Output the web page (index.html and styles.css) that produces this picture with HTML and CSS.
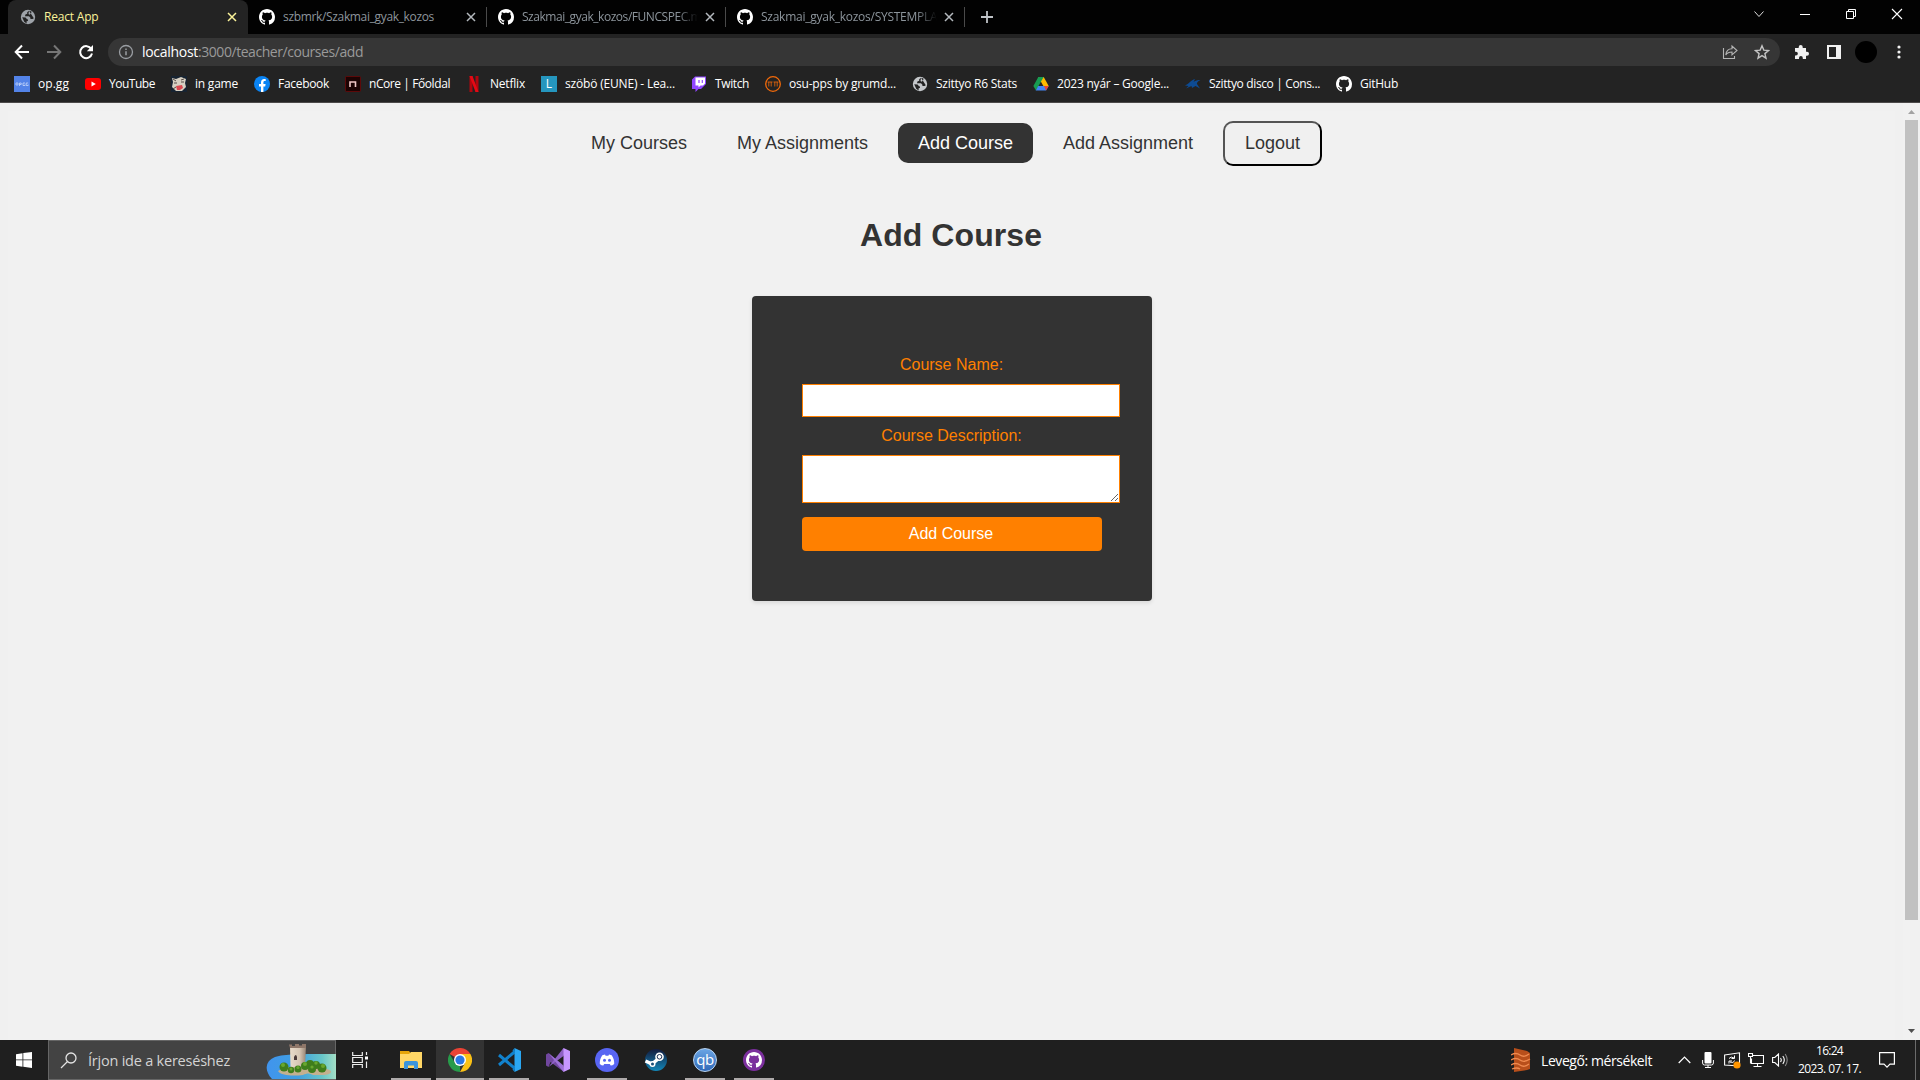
FILE: index.html
```
<!DOCTYPE html>
<html lang="hu">
<head>
<meta charset="utf-8">
<title>React App</title>
<link rel="stylesheet" href="styles.css">
</head>
<body>
<svg class="defs" width="0" height="0">
  <symbol id="octocat" viewBox="0 0 16 16"><path fill="currentColor" d="M8 0C3.58 0 0 3.58 0 8c0 3.54 2.29 6.53 5.47 7.59.4.07.55-.17.55-.38 0-.19-.01-.82-.01-1.49-2.01.37-2.53-.49-2.69-.94-.09-.23-.48-.94-.82-1.13-.28-.15-.68-.52-.01-.53.63-.01 1.08.58 1.23.82.72 1.21 1.87.87 2.33.66.07-.52.28-.87.51-1.07-1.78-.2-3.64-.89-3.64-3.95 0-.87.31-1.59.82-2.15-.08-.2-.36-1.02.08-2.12 0 0 .67-.21 2.2.82.64-.18 1.32-.27 2-.27s1.36.09 2 .27c1.53-1.04 2.2-.82 2.2-.82.44 1.1.16 1.92.08 2.12.51.56.82 1.27.82 2.15 0 3.07-1.87 3.75-3.65 3.95.29.25.54.73.54 1.48 0 1.07-.01 1.93-.01 2.2 0 .21.15.46.55.38A8.01 8.01 0 0 0 16 8c0-4.42-3.58-8-8-8z"/></symbol>
  <symbol id="globe" viewBox="0 0 16 16"><circle cx="8" cy="8" r="7.2" fill="currentColor"/><path class="land" d="M9 1.8 7.2 3.3v1.5l-1.8.7-.4 1.8H9l1.4 1.4v1.4h2.2l1.2-.8M2.2 8.3l3.4.2L7 10.2l1 .3v1.2l-1.5.8.2 1.9-2.5-1.7zM9 1.8l2.5.7-.4 2-1.6 1.3-1-.8z"/></symbol>
  <symbol id="cross" viewBox="0 0 10 10"><path d="m1 1 8 8M9 1 1 9" stroke="currentColor" stroke-width="1.5"/></symbol>
</svg>

<header class="browser">
  <div class="tabstrip">
    <div class="tab active">
      <svg class="fav"><use href="#globe"/></svg><span class="title"><span data-w="54.5">React App</span></span><svg class="close"><use href="#cross"/></svg>
    </div>
    <div class="tab">
      <svg class="fav"><use href="#octocat"/></svg><span class="title"><span data-w="151">szbmrk/Szakmai_gyak_kozos</span></span><svg class="close"><use href="#cross"/></svg>
    </div>
    <div class="tab">
      <svg class="fav"><use href="#octocat"/></svg><span class="title fade"><span data-w="186">Szakmai_gyak_kozos/FUNCSPEC.md</span></span><svg class="close"><use href="#cross"/></svg>
    </div>
    <div class="tab">
      <svg class="fav"><use href="#octocat"/></svg><span class="title fade"><span data-w="206">Szakmai_gyak_kozos/SYSTEMPLAN.md</span></span><svg class="close"><use href="#cross"/></svg>
    </div>
    <svg class="newtab" viewBox="0 0 12 12"><path d="M6 0v12M0 6h12" stroke="#bfc3c7" stroke-width="1.8"/></svg>
    <div class="winctl">
      <svg viewBox="0 0 12 12"><path d="m1.5 3.5 4.5 5 4.5-5" fill="none" stroke="#ddd"/></svg>
      <svg viewBox="0 0 12 12"><path d="M1 6.5h10" stroke="#fff"/></svg>
      <svg viewBox="0 0 12 12"><path d="M1.5 3.5h7v7h-7zM3.5 3.5v-2h7v7h-2" fill="none" stroke="#fff"/></svg>
      <svg viewBox="0 0 12 12"><path d="m1 1 10 10M11 1 1 11" stroke="#fff" stroke-width="1.1"/></svg>
    </div>
  </div>

  <div class="toolbar">
    <svg class="nav" viewBox="0 0 16 16"><path d="M15 8H2M8 1.5 1.7 8 8 14.5" fill="none" stroke="#fff" stroke-width="2"/></svg>
    <svg class="nav" viewBox="0 0 16 16"><path d="M1 8h13M8 1.5 14.3 8 8 14.5" fill="none" stroke="#767676" stroke-width="2"/></svg>
    <svg class="nav" viewBox="0 0 16 16"><path d="M13.3 5A6 6 0 1 0 14 9.5" fill="none" stroke="#fff" stroke-width="2"/><path d="M15 1v6.2H8.8z" fill="#fff"/></svg>
    <div class="omnibox">
      <svg class="info" viewBox="0 0 16 16"><circle cx="8" cy="8" r="6.5" fill="none" stroke="#9a9ea3" stroke-width="1.3"/><path d="M8 7.2v4M8 4.4v1.5" stroke="#9a9ea3" stroke-width="1.5"/></svg>
      <span class="url"><span class="host" data-w="56">localhost</span><span data-w="165">:3000/teacher/courses/add</span></span>
      <svg class="share" viewBox="0 0 16 16"><path d="M1.5 4v10.5h11V12M3.8 11c.3-4 2.700-6.200 6.200-6.200V2l5 4.500-5 4.300V8C7.400 8 5.200 8.700 3.800 11z" fill="none" stroke="#b5b5b5" stroke-width="1.1"/></svg>
      <svg class="star" viewBox="0 0 16 16"><path d="m8 1.800 1.800 4.300 4.700.4-3.600 3.100 1.100 4.600L8 11.700l-4 2.500 1.100-4.600L1.500 6.500l4.700-.4z" fill="none" stroke="#c4c4c4" stroke-width="1.4"/></svg>
    </div>
    <svg class="ext" viewBox="0 0 16 16"><path fill="#f1f1f1" d="M1 4h3.700V3a2 2 0 0 1 4 0v1H12v3.700h1a2 2 0 0 1 0 4h-1V15H8.800v-1a1.900 1.900 0 0 0-3.800 0v1H1v-3.600h1a1.800 1.800 0 0 0 0-3.700H1z"/></svg>
    <svg class="panel" viewBox="0 0 14 14"><path fill="#f1f1f1" fill-rule="evenodd" d="M0 0h14v14H0zM2 2v10h7V2z"/></svg>
    <span class="avatar"></span>
    <svg class="menu" viewBox="0 0 4 14"><circle cx="2" cy="2" r="1.600" fill="#f1f1f1"/><circle cx="2" cy="7" r="1.600" fill="#f1f1f1"/><circle cx="2" cy="12" r="1.600" fill="#f1f1f1"/></svg>
  </div>

  <nav class="bookmarks">
    <a><svg viewBox="0 0 16 16"><path fill="#5383e8" d="M0 0h16v16H0z"/><g fill="none" stroke="#c6d7fa" stroke-width=".8"><circle cx="3" cy="8" r="1.200"/><path d="M5.500 10V7h1.700v1.500H5.500M11 7H9v2.500h2V8.500M14.200 7h-2v2.500h2V8.500"/></g></svg><span data-w="31">op.gg</span></a>
    <a><svg viewBox="0 0 16 16"><rect y="2" width="16" height="12" rx="3" fill="#f00"/><path fill="#fff" d="m6.500 5.500 4.300 2.500-4.300 2.500z"/></svg><span data-w="46">YouTube</span></a>
    <a><svg viewBox="0 0 16 16"><path fill="#172331" d="M0 0h16v16H0z"/><path fill="#d7d0c2" d="m1 2 4 1 5-2 5 2-1 4 1 4-4 4H5l-4-4 1-5z"/><path fill="#da4850" d="m5 10 6-1 1 3-3 2H6z"/><path d="m2 3 3 2m5-1 3-1M3 7h3m4-1h3M2 13l3-2" stroke="#574b46"/></svg><span data-w="43">in game</span></a>
    <a><svg viewBox="0 0 16 16"><circle cx="8" cy="8" r="8" fill="#0a84f4"/><path fill="#fff" d="M7 16v-5.500H5V8h2V6.500C7 4.200 8.200 3 10.200 3l1.500.1v2h-1C9.700 5.100 9.400 5.700 9.400 6.400V8h2.200l-.4 2.500H9.400V16z"/></svg><span data-w="51">Facebook</span></a>
    <a><svg viewBox="0 0 16 16"><rect width="16" height="16" rx="2" fill="#5c0909"/><rect x="1" y="1" width="14" height="14" fill="#1c0303"/><path d="M5 11V6h5.500v5" fill="none" stroke="#efc6c6" stroke-width="1.600"/></svg><span data-w="81">nCore | Főoldal</span></a>
    <a><svg viewBox="0 0 16 16"><path fill="#b1060f" d="M3.500 0h3v16h-3zM9.500 0h3v16h-3z"/><path fill="#e50914" d="M3.500 0h3l6 16h-3z"/></svg><span data-w="35">Netflix</span></a>
    <a><span class="letter">L</span><span data-w="110">szöbö (EUNE) - Lea...</span></a>
    <a><svg viewBox="0 0 16 16"><path fill="#9146ff" d="M4 .5 1 3.500v9.500h3.500v3l3-3H10l5-5V.5z"/><path fill="#fff" d="M4.500 1.500H14v6l-2 2H9.500l-2 2v-2h-3z"/><path d="M8 4v3M11.300 4v3" stroke="#9146ff" stroke-width="1.200"/></svg><span data-w="34">Twitch</span></a>
    <a><svg viewBox="0 0 16 16"><g fill="none" stroke="#f26a0a"><circle cx="8" cy="8" r="7.300" stroke-width="1.300"/><path d="M2.500 6h5M3.800 6v4.500M6.200 6v4.500M8.500 6h5M9.800 6v4.500M12.200 6v4.500" stroke-width=".8"/></g></svg><span data-w="107">osu-pps by grumd...</span></a>
    <a class="grey"><svg viewBox="0 0 16 16"><use href="#globe"/></svg><span data-w="81">Szittyo R6 Stats</span></a>
    <a><svg viewBox="0 0 16 16"><path fill="#ffba00" d="M5.300 1h5.400l5 9h-5.300z"/><path fill="#179c52" d="M5.300 1h5.400L8 5.600 3 14.500.4 10z"/><path fill="#4285f4" d="M5.200 10h10.500L13 14.500H2.700z"/><path fill="#ea4335" d="M11 10h4.700L13 14.500z"/></svg><span data-w="112">2023 nyár – Google...</span></a>
    <a><svg viewBox="0 0 16 16"><path fill="#0d4b93" d="M0 9.500C4 8 6 4 10 3L8.500 6c2-1.500 4-2 7-2-3 1.500-4 3-3.500 4L15 12.500 10.500 10 7 12l-.5-2L1 12.500 3.500 10z"/></svg><span data-w="111">Szittyo disco | Cons...</span></a>
    <a><svg viewBox="0 0 16 16"><use href="#octocat"/></svg><span data-w="38">GitHub</span></a>
  </nav>
</header>

<div class="viewport">
  <main class="page">
    <nav class="sitenav">
      <a><span data-w="96">My Courses</span></a>
      <a><span data-w="131">My Assignments</span></a>
      <a class="current"><span data-w="95">Add Course</span></a>
      <a><span data-w="130">Add Assignment</span></a>
      <button class="logout"><span data-w="55">Logout</span></button>
    </nav>
    <h1><span data-w="182">Add Course</span></h1>
    <form class="card">
      <label>Course Name:</label>
      <input type="text">
      <label>Course Description:</label>
      <textarea></textarea>
      <button type="button" class="submit">Add Course</button>
    </form>
  </main>
  <div class="scrollbar">
    <svg viewBox="0 0 7 4"><path fill="#a3a3a3" d="M3.500 0 7 4H0z"/></svg>
    <div class="thumb"></div>
    <svg viewBox="0 0 7 4"><path fill="#505050" d="M3.500 4 7 0H0z"/></svg>
  </div>
</div>

<footer class="taskbar">
  <div class="start"><svg viewBox="0 0 16 16"><path fill="#fff" d="M0 2.200 6.500 1.200v6.300H0zM7.300 1.100 16 0v7.500H7.300zM0 8.300h6.500v6.400L0 13.700zM7.300 8.300H16V16l-8.700-1.200z"/></svg></div>
  <div class="search">
    <svg class="lens" viewBox="0 0 17 17"><circle cx="11" cy="6" r="5" fill="none" stroke="#e3e3e3" stroke-width="1.300"/><path d="M7.500 9.500 1 16" stroke="#e3e3e3" stroke-width="1.300"/></svg>
    <span data-w="142">Írjon ide a kereséshez</span>
    <svg class="island" viewBox="0 0 70 38">
      <defs>
        <linearGradient id="sea"><stop offset="0" stop-color="#4094ee"/><stop offset=".45" stop-color="#3f9fe0"/><stop offset=".8" stop-color="#67c6c8"/><stop offset="1" stop-color="#a4dfc6"/></linearGradient>
        <linearGradient id="stone"><stop offset="0" stop-color="#e9dccb"/><stop offset=".6" stop-color="#d6c6b4"/><stop offset="1" stop-color="#988575"/></linearGradient>
      </defs>
      <path fill="url(#sea)" d="M70 13v25H6C-2 30-1 20 9 16c10-3 24-3 61-3z"/>
      <path fill="#c3b08f" d="M12 30c8-6 42-8 53 0 1 5-12 4-18 4-3-2-6-2-10 0-9 1-22 1-25-4z"/>
      <g fill="#3f7d1c"><circle cx="18" cy="26" r="4.500"/><circle cx="44" cy="23" r="4"/><circle cx="50" cy="24" r="4"/></g>
      <path fill="url(#stone)" d="M24 5h16l-1 21H24.500z"/><path fill="#8f7769" d="M23 3.500h3v1.500h3V3h4v1.500h3V3h4v4H24z"/>
      <path fill="#4b3a3a" d="M28 16q2-4 3 0v3h-3z"/>
      <g fill="#3f7d1c"><circle cx="25" cy="29" r="3.200"/><circle cx="32" cy="28" r="3.500"/><circle cx="39" cy="25" r="4"/><circle cx="46" cy="28" r="4"/><circle cx="56" cy="27" r="4.500"/></g>
      <g fill="#68a72e"><circle cx="17" cy="24" r="2"/><circle cx="25" cy="28" r="1.500"/><circle cx="32" cy="26.500" r="1.600"/><circle cx="39" cy="23" r="2"/><circle cx="46" cy="26" r="1.600"/><circle cx="50" cy="22" r="1.700"/><circle cx="57" cy="25" r="2"/></g>
    </svg>
  </div>
  <div class="taskview"><svg viewBox="0 0 16 16"><path d="M.7 0v3.500h9.600V0M.7 16v-3.500h9.600V16M.7 5.500h9.600v5H.7zM14.500 0v3M14.500 9.500V16" fill="none" stroke="#eee" stroke-width="1.200"/><path fill="#fff" d="M13 4.500h3v3h-3z"/></svg></div>

  <div class="apps">
    <div class="app open"><svg viewBox="0 0 24 24"><path fill="#e5a50a" d="M1 3h9l1.500 2v3H1z"/><path fill="#ffd766" d="M1 6h9l2-2h11v16H1z"/><path fill="#3a94db" d="M5 21v-6q0-2 2-2h10q2 0 2 2v6h-4v-3.500H9V21z"/></svg></div>
    <div class="app open focus"><svg viewBox="0 0 24 24"><path fill="#ea4335" d="M12 12 1.600 6A12 12 0 0 1 22.400 6z"/><path fill="#279b4a" d="M1.600 6 7 15l5 2.500L12 24A12 12 0 0 1 1.600 6z"/><path fill="#fbc116" d="M12 6h10.400A12 12 0 0 1 12 24l5-9z"/><circle cx="12" cy="12" r="6" fill="#fff"/><circle cx="12" cy="12" r="4.600" fill="#2b78e4"/></svg></div>
    <div class="app open"><svg viewBox="0 0 24 24"><path d="M18 3.500 2 17M18 20.500 2 7" stroke="#1182cd" stroke-width="3"/><path fill="#2aa7f2" d="m17.500 0 6.500 3v18l-6.500 3z"/><path fill="#1182cd" d="m17.500 0-2 2.500 2.500 4zM17.500 24l-2-2.500 2.500-4z"/></svg></div>
    <div class="app"><svg viewBox="0 0 24 24"><path fill="#71479f" d="m0 6.500 2.500-1.500L18 19v5L4.500 14 2.500 19 0 17.500z"/><path fill="#8e61c4" d="m2.500 19 15-19 2.500 4-2.500 4z"/><path fill="#9c70d6" d="m2.500 5 15 12.500V24z"/><path fill="#c797ff" d="m17.500 0 6.500 3v18l-6.500 3z"/></svg></div>
    <div class="app open"><svg viewBox="0 0 24 24"><circle cx="12" cy="12" r="12" fill="#5865f2"/><path fill="#fff" d="M7.300 7.300 10 6.500l.6 1.200h2.800l.6-1.200 2.700.8c2 3 2.700 5.600 2.500 8.600-1.200 1-2.300 1.500-3.500 1.700l-.9-1.500H9.200l-.9 1.500c-1.200-.2-2.300-.7-3.500-1.700-.2-3 .5-5.600 2.500-8.600z"/><circle cx="9.500" cy="12.300" r="1.500" fill="#5865f2"/><circle cx="14.500" cy="12.300" r="1.500" fill="#5865f2"/></svg></div>
    <div class="app"><svg viewBox="0 0 24 24"><defs><linearGradient id="stm" x2="0" y2="1"><stop stop-color="#131b3d"/><stop offset="1" stop-color="#1387b8"/></linearGradient></defs><circle cx="12" cy="12" r="11" fill="url(#stm)"/><path d="m1.500 13 6.500 3 6-5" fill="none" stroke="#fff" stroke-width="3.500"/><circle cx="8.500" cy="16" r="3" fill="#fff"/><circle cx="8.500" cy="16" r="1.500" fill="#1b4f78"/><circle cx="15.500" cy="8.800" r="4.300" fill="#fff"/><circle cx="15.500" cy="8.800" r="2.300" fill="none" stroke="#1b3157"/></svg></div>
    <div class="app open"><span class="qb">qb</span></div>
    <div class="app open"><span class="ghd"><svg viewBox="0 0 16 16"><use href="#octocat"/></svg></span></div>
  </div>

  <div class="tray">
    <svg class="air" viewBox="0 0 20 24"><path fill="#b84f1b" d="m3 0 13 3 3 2v16l-3 1-13 2z"/><path d="M0 7q5-3 9 0t9-1M0 12q5-3 9 0t10-1M0 17q5-3 9 0t9-1M1 21q5-2 8 0" fill="none" stroke="#f08a4f" stroke-width="1.300"/></svg>
    <span class="weather"><span data-w="111">Levegő: mérsékelt</span></span>
    <svg class="up" viewBox="0 0 13 8"><path d="m.7 7 5.800-6 5.800 6" fill="none" stroke="#fff" stroke-width="1.200"/></svg>
    <svg class="mic" viewBox="0 0 12 16"><rect x="2.500" width="7" height="11.500" rx="1" fill="#fff"/><path d="M.6 8v3q0 2 2 2h6.800q2 0 2-2V8M6 13v2.500M3 15.500h6" fill="none" stroke="#fff"/></svg>
    <svg class="sync" viewBox="0 0 17 17"><path d="M.6 3 15.500.8V14L.6 13z" fill="none" stroke="#fff" stroke-width="1.100"/><path d="M5 6.500q2-2.500 5-.5M10.500 3.500V6.500H7.500M10.500 8.500q-1 3-4.500 1.500M5 11.500V9h3" fill="none" stroke="#fff" stroke-width="1"/><circle cx="13" cy="13" r="3.600" fill="#ff9500"/></svg>
    <svg class="net" viewBox="0 0 16 16"><path d="M5 3.500h10.500v8H3.500v-5M9.500 11.500v3M5.500 14.500h8M.5 1.500h4v3h-4zM2.500 4.500v7" fill="none" stroke="#fff" stroke-width="1.100"/></svg>
    <svg class="vol" viewBox="0 0 17 14"><path d="M.6 4.500h2.200L6.500 1v12L2.800 9.500H.6zM8.500 5q1.500 2 0 4M10.800 3q3 4 0 8" fill="none" stroke="#fff" stroke-width="1.100"/><path d="M13.200 1q4 6 0 12" fill="none" stroke="#888" stroke-width="1.100"/></svg>
    <div class="clock"><span data-w="27">16:24</span><span data-w="63">2023. 07. 17.</span></div>
    <svg class="note" viewBox="0 0 16 16"><path d="M.6.600h14.800v11.500H11l-3 3-3-3H.6z" fill="none" stroke="#fff" stroke-width="1.200"/></svg>
    <span class="peek"></span>
  </div>
</footer>
<script src="script.js"></script>
</body>
</html>
```
FILE: styles.css
```
* { box-sizing: border-box; }
body {
  margin: 0;
  width: 1920px;
  height: 1080px;
  overflow: hidden;
  display: flex;
  flex-direction: column;
  background: #f0f0f0;
  font-family: "Open Sans", "Noto Sans", sans-serif;
  font-size: 12px;
  color: #fff;
}
svg { display: block; flex: none; }
.defs { display: none; }
[data-w] { display: inline-block; white-space: pre; }

/* Browser chrome */
.browser { height: 103px; flex: none; background: #232323; border-bottom: 1px solid #4c4a4a; }
.tabstrip { height: 34px; background: #020202; display: flex; align-items: center; padding-left: 8px; }
.tab {
  width: 239px;
  height: 20px;
  display: flex;
  align-items: center;
  padding: 0 10px 0 11px;
  color: #8d959c;
  border-right: 1px solid #4a4a4a;
}
.tab.active {
  width: 240px;
  height: 34px;
  padding: 0 11px 0 12px;
  border: 0;
  border-radius: 8px 8px 0 0;
  background: #232323;
  color: #fbf39a;
}
.fav { width: 16px; height: 16px; color: #fff; }
.active .fav { color: #9ea3a9; }
.land { fill: #232323; }
.title { flex: 1; margin-left: 8px; overflow: hidden; white-space: nowrap; line-height: 18px; }
.fade { -webkit-mask-image: linear-gradient(to right, #000 88%, transparent); mask-image: linear-gradient(to right, #000 88%, transparent); }
.close { width: 10px; height: 10px; margin-left: 7px; color: #b4b9be; }
.active .close { color: #fbf39a; }
.newtab { width: 12px; height: 12px; margin-left: 16px; }
.winctl { margin-left: auto; display: flex; gap: 34px; padding-right: 17px; margin-top: -6px; }
.winctl svg { width: 12px; height: 12px; }

.toolbar { height: 32px; display: flex; align-items: center; padding: 4px 18px 0 14px; }
.nav { width: 16px; height: 16px; margin-right: 16px; }
.omnibox {
  width: 1672px;
  height: 28px;
  margin-left: -2px;
  border-radius: 14px;
  background: #363636;
  display: flex;
  align-items: center;
  padding: 0 10px;
}
.info { width: 16px; height: 16px; }
.url { flex: 1; margin-left: 8px; font-size: 14px; color: #9a9a9a; white-space: nowrap; line-height: 20px; }
.host { color: #fff; }
.share { width: 16px; height: 16px; margin-right: 16px; }
.star { width: 16px; height: 16px; }
.ext { width: 16px; height: 16px; margin-left: 14px; }
.panel { width: 14px; height: 14px; margin-left: 17px; }
.avatar { width: 22px; height: 22px; margin-left: 14px; border-radius: 50%; background: #000; }
.menu { width: 4px; height: 14px; margin-left: 20px; }

.bookmarks {
  height: 36px;
  display: flex;
  align-items: center;
  gap: 16px;
  padding-left: 14px;
}
.bookmarks a { display: flex; align-items: center; gap: 8px; line-height: 18px; }
.bookmarks svg { width: 16px; height: 16px; }
.grey svg { color: #c4c7ca; }
.letter { width: 16px; height: 16px; background: #2596be; text-align: center; line-height: 16px; }

/* Web page */
.viewport { flex: 1; display: flex; padding: 8px 0 0 8px; }
.page {
  width: 1887px;
  background: #f1f1f1;
  font-family: "Liberation Sans", Arial, sans-serif;
  color: #333;
}
.sitenav { display: flex; align-items: flex-start; gap: 10px; padding: 10px 0 0 563px; height: 55px; font-size: 18px; }
.sitenav a { height: 40px; margin-top: 2px; padding: 0 20px; line-height: 40px; border-radius: 10px; }
.sitenav .current { background: #333; color: #fff; }
.logout {
  height: 45px;
  padding: 0 20px;
  background: #f0f0f0;
  border: 2px outset #000;
  border-radius: 10px;
  color: #333;
  font: 18px "Liberation Sans", Arial, sans-serif;
}
h1 { margin: 51px 0 43px 852px; font-size: 32px; line-height: 36px; white-space: nowrap; }
.card {
  width: 400px;
  height: 305px;
  margin-left: 744px;
  padding: 60px 50px 50px;
  background: #333;
  border-radius: 4px;
  box-shadow: 0 2px 4px rgba(0, 0, 0, .1);
  display: flex;
  flex-direction: column;
  font-size: 16px;
  color: #ff8000;
}
.card label { text-align: center; line-height: 18px; padding-right: 1px; }
.card input, .card textarea {
  width: 318px;
  flex: none;
  margin: 0;
  border: 1px solid #ff8000;
  background: #fff;
}
.card input { height: 33px; margin: 10px 0; }
.card textarea { height: 48px; margin: 10px 0 14px; }
.submit {
  width: 300px;
  height: 34px;
  flex: none;
  padding: 0 2px 0 0;
  border: 0;
  border-radius: 4px;
  background: #ff8000;
  color: #fff;
  font: 16px "Liberation Sans", Arial, sans-serif;
}
.scrollbar { width: 17px; margin: -8px 0 0 8px; padding: 7px 0 7px; display: flex; flex-direction: column; align-items: center; background: #f1f1f1; }
.scrollbar svg { width: 7px; height: 4px; }
.thumb { width: 13px; height: 800px; margin: 6px 0 auto; background: #c1c1c1; }

/* Taskbar */
.taskbar { height: 40px; flex: none; background: #1f1f1f; display: flex; }
.start { width: 48px; padding: 12px 16px; }
.start svg { width: 16px; height: 16px; }
.search {
  width: 288px;
  border: 1px solid #666;
  background: #434343;
  display: flex;
  align-items: center;
  padding-left: 11px;
  font-size: 14.500px;
  color: #d4d4d4;
}
.lens { width: 17px; height: 17px; margin-right: 11px; }
.island { width: 70px; height: 38px; margin-left: auto; margin-right: -1px; }
.taskview { width: 51px; padding: 12px 0 0 16px; }
.taskview svg { width: 16px; height: 16px; }
.apps { display: flex; gap: 1px; }
.app { width: 48px; height: 40px; display: flex; align-items: center; justify-content: center; }
.app > svg { width: 24px; height: 24px; }
.open { background: linear-gradient(#aeaaaa, #aeaaaa) center bottom / 40px 2px no-repeat; }
.focus { background-color: #333; background-size: 48px 2px; }
.qb {
  width: 24px;
  height: 24px;
  border: 1px solid #b9d5f3;
  border-radius: 50%;
  background: linear-gradient(#6ba5e4, #3069b8);
  text-align: center;
  font-size: 15px;
  line-height: 20px;
  letter-spacing: -.5px;
}
.ghd { width: 22px; height: 22px; padding: 3px; border-radius: 50%; background: #7b2f9d; }
.ghd svg { width: 16px; height: 16px; }

.tray { margin-left: auto; display: flex; align-items: center; }
.air { width: 20px; height: 24px; }
.weather { width: 111px; margin-left: 10px; font-size: 14px; white-space: nowrap; }
.up { width: 13px; height: 8px; margin-left: 26px; }
.mic { width: 12px; height: 16px; margin-left: 11px; }
.sync { width: 17px; height: 17px; margin-left: 10px; }
.net { width: 16px; height: 16px; margin-left: 7px; }
.vol { width: 17px; height: 14px; margin-left: 8px; }
.clock { width: 63px; margin-left: 9px; display: flex; flex-direction: column; align-items: center; line-height: 18px; }
.note { width: 16px; height: 16px; margin-left: 18px; }
.peek { width: 1px; height: 40px; margin: 0 4px 0 20px; background: #6b6b6b; }
```
FILE: script.js
```
// Track each label so that it fills the width given in data-w.
document.querySelectorAll('[data-w]').forEach(function (el) {
  var target = parseFloat(el.dataset.w);
  var natural = el.getBoundingClientRect().width;
  el.style.letterSpacing = (target - natural) / el.textContent.length + 'px';
});
```
